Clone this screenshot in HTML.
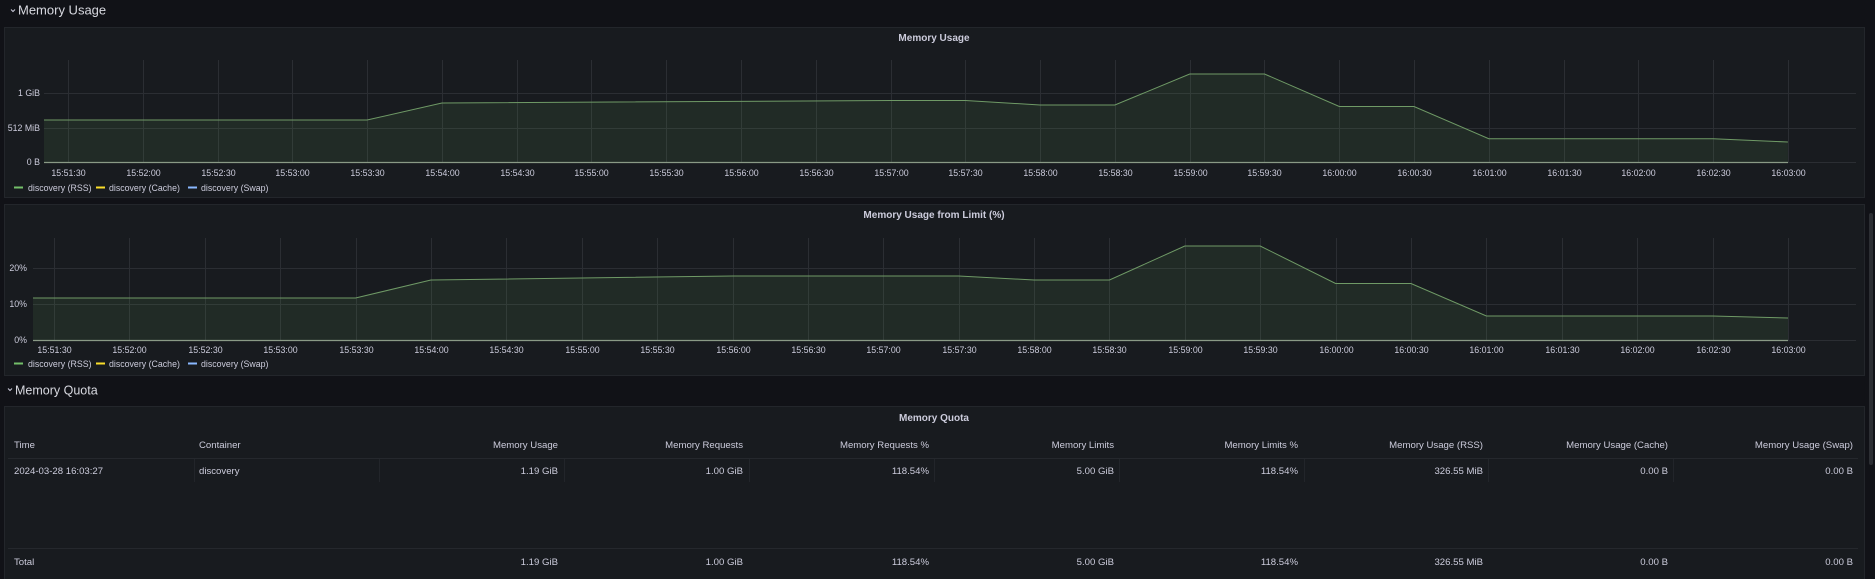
<!DOCTYPE html>
<html><head><meta charset="utf-8"><style>
html,body{margin:0;padding:0;background:#111217;width:1875px;height:579px;overflow:hidden}
svg{display:block;font-family:"Liberation Sans",sans-serif}
</style></head><body>
<svg width="1875" height="579" viewBox="0 0 1875 579" xmlns="http://www.w3.org/2000/svg">
<rect width="1875" height="579" fill="#111217"/>
<rect x="1869" y="213" width="4" height="252" rx="2" fill="#2c2e33"/>

<path d="M11 9.5 L13 11.5 L15 9.5" stroke="#ccccdc" stroke-width="1" fill="none"/>
<text x="18" y="14.5" font-size="13" fill="#d8d9e0">Memory Usage</text>

<rect x="4.5" y="27.5" width="1860" height="170" fill="#181b1f" stroke="#23262b"/>
<text x="934" y="41" font-size="10" font-weight="bold" fill="#ccccdc" text-anchor="middle">Memory Usage</text>
<g stroke="#2b2e33" stroke-width="1">
<line x1="44" y1="93.5" x2="1856" y2="93.5"/>
<line x1="44" y1="128.5" x2="1856" y2="128.5"/>
<line x1="44" y1="162.5" x2="1856" y2="162.5"/>
</g>
<g id="vg1" stroke="#2b2e33" stroke-width="1"></g>
<g font-size="8.8" fill="#ccccdc" text-anchor="end">
<text x="40" y="96">1 GiB</text>
<text x="40" y="131">512 MiB</text>
<text x="40" y="165">0 B</text>
</g>
<g id="xl1" font-size="8.8" fill="#ccccdc" text-anchor="middle"></g>
<path id="f1" fill="rgba(115,191,105,0.10)" stroke="none"/>
<path id="p1" fill="none" stroke="#6f9a66" stroke-width="1"/>
<line x1="44" y1="162.5" x2="1788" y2="162.5" stroke="#8a9a86" stroke-width="1.2"/>
<g font-size="8.8" fill="#ccccdc">
<line x1="14" y1="187.5" x2="23" y2="187.5" stroke="#73bf69" stroke-width="2"/>
<text x="28" y="191">discovery (RSS)</text>
<line x1="96" y1="187.5" x2="105" y2="187.5" stroke="#fade2a" stroke-width="2"/>
<text x="109" y="191">discovery (Cache)</text>
<line x1="188" y1="187.5" x2="197" y2="187.5" stroke="#8ab8ff" stroke-width="2"/>
<text x="201" y="191">discovery (Swap)</text>
</g>

<rect x="4.5" y="204.5" width="1860" height="171" fill="#181b1f" stroke="#23262b"/>
<text x="934" y="218" font-size="10" font-weight="bold" fill="#ccccdc" text-anchor="middle">Memory Usage from Limit (%)</text>
<g stroke="#2b2e33" stroke-width="1">
<line x1="33" y1="268.5" x2="1856" y2="268.5"/>
<line x1="33" y1="304.5" x2="1856" y2="304.5"/>
<line x1="33" y1="340.5" x2="1856" y2="340.5"/>
</g>
<g id="vg2" stroke="#2b2e33" stroke-width="1"></g>
<g font-size="8.8" fill="#ccccdc" text-anchor="end">
<text x="27" y="271">20%</text>
<text x="27" y="307">10%</text>
<text x="27" y="343">0%</text>
</g>
<g id="xl2" font-size="8.8" fill="#ccccdc" text-anchor="middle"></g>
<path id="f2" fill="rgba(115,191,105,0.10)" stroke="none"/>
<path id="p2" fill="none" stroke="#6f9a66" stroke-width="1"/>
<line x1="33" y1="340.5" x2="1788" y2="340.5" stroke="#8a9a86" stroke-width="1.2"/>
<g font-size="8.8" fill="#ccccdc">
<line x1="14" y1="363.5" x2="23" y2="363.5" stroke="#73bf69" stroke-width="2"/>
<text x="28" y="367">discovery (RSS)</text>
<line x1="96" y1="363.5" x2="105" y2="363.5" stroke="#fade2a" stroke-width="2"/>
<text x="109" y="367">discovery (Cache)</text>
<line x1="188" y1="363.5" x2="197" y2="363.5" stroke="#8ab8ff" stroke-width="2"/>
<text x="201" y="367">discovery (Swap)</text>
</g>

<path d="M8 388.5 L10 390.5 L12 388.5" stroke="#ccccdc" stroke-width="1" fill="none"/>
<text x="15" y="394.5" font-size="12.5" fill="#d8d9e0">Memory Quota</text>

<rect x="4.5" y="406.5" width="1860" height="180" fill="#181b1f" stroke="#23262b"/>
<text x="934" y="421" font-size="10" font-weight="bold" fill="#ccccdc" text-anchor="middle">Memory Quota</text>
<line x1="8" y1="458.5" x2="1858" y2="458.5" stroke="#25282d"/>
<line x1="8" y1="548.5" x2="1858" y2="548.5" stroke="#25282d"/>
<g stroke="#22252a">
<line x1="194.5" y1="459" x2="194.5" y2="482"/>
<line x1="379.5" y1="459" x2="379.5" y2="482"/>
<line x1="564.5" y1="459" x2="564.5" y2="482"/>
<line x1="749.5" y1="459" x2="749.5" y2="482"/>
<line x1="934.5" y1="459" x2="934.5" y2="482"/>
<line x1="1119.5" y1="459" x2="1119.5" y2="482"/>
<line x1="1304.5" y1="459" x2="1304.5" y2="482"/>
<line x1="1488.5" y1="459" x2="1488.5" y2="482"/>
<line x1="1673.5" y1="459" x2="1673.5" y2="482"/>
</g>
<g font-size="9.6" fill="#ccccdc">
<text x="14" y="448">Time</text>
<text x="199" y="448">Container</text>
<g text-anchor="end">
<text x="558" y="448">Memory Usage</text>
<text x="743" y="448">Memory Requests</text>
<text x="929" y="448">Memory Requests %</text>
<text x="1114" y="448">Memory Limits</text>
<text x="1298" y="448">Memory Limits %</text>
<text x="1483" y="448">Memory Usage (RSS)</text>
<text x="1668" y="448">Memory Usage (Cache)</text>
<text x="1853" y="448">Memory Usage (Swap)</text>
</g>
<text x="14" y="474">2024-03-28 16:03:27</text>
<text x="199" y="474">discovery</text>
<g text-anchor="end">
<text x="558" y="474">1.19 GiB</text>
<text x="743" y="474">1.00 GiB</text>
<text x="929" y="474">118.54%</text>
<text x="1114" y="474">5.00 GiB</text>
<text x="1298" y="474">118.54%</text>
<text x="1483" y="474">326.55 MiB</text>
<text x="1668" y="474">0.00 B</text>
<text x="1853" y="474">0.00 B</text>
</g>
<text x="14" y="565">Total</text>
<g text-anchor="end">
<text x="558" y="565">1.19 GiB</text>
<text x="743" y="565">1.00 GiB</text>
<text x="929" y="565">118.54%</text>
<text x="1114" y="565">5.00 GiB</text>
<text x="1298" y="565">118.54%</text>
<text x="1483" y="565">326.55 MiB</text>
<text x="1668" y="565">0.00 B</text>
<text x="1853" y="565">0.00 B</text>
</g>
</g>
</svg>
<script>
(function(){
var NS="http://www.w3.org/2000/svg";
var labels=["15:51:30","15:52:00","15:52:30","15:53:00","15:53:30","15:54:00","15:54:30","15:55:00","15:55:30","15:56:00","15:56:30","15:57:00","15:57:30","15:58:00","15:58:30","15:59:00","15:59:30","16:00:00","16:00:30","16:01:00","16:01:30","16:02:00","16:02:30","16:03:00"];
function build(vg,xl,x0,step,top,bot,ly){
  var g=document.getElementById(vg),t=document.getElementById(xl);
  for(var k=0;k<24;k++){
    var x=Math.round(x0+k*step)+0.5;
    var l=document.createElementNS(NS,"line");
    l.setAttribute("x1",x);l.setAttribute("x2",x);l.setAttribute("y1",top);l.setAttribute("y2",bot);
    g.appendChild(l);
    var tx=document.createElementNS(NS,"text");
    tx.setAttribute("x",x);tx.setAttribute("y",ly);tx.textContent=labels[k];
    t.appendChild(tx);
  }
}
build("vg1","xl1",68,74.78,60,163,176);
build("vg2","xl2",54,75.39,238,341,353);
function path(id,fid,x0,step,start,base,pts){
  var d="M"+start[0]+" "+start[1];
  pts.forEach(function(p){d+=" L"+(x0+p[0]*step).toFixed(1)+" "+p[1];});
  var last=x0+pts[pts.length-1][0]*step;
  document.getElementById(id).setAttribute("d",d);
  document.getElementById(fid).setAttribute("d",d+" L"+last.toFixed(1)+" "+base+" L"+start[0]+" "+base+" Z");
}
path("p1","f1",68,74.78,[44,120],162.5,[[4,120],[5,103],[11,100.5],[12,100.5],[13,105],[14,105],[15,74],[16,74],[17,106.5],[18,106.5],[19,138.7],[22,138.7],[23,142]]);
path("p2","f2",54,75.39,[33,298],340.5,[[4,298],[5,280],[9,276],[12,276],[13,280],[14,280],[15,246],[16,246],[17,283.5],[18,283.5],[19,316],[22,316],[23,318]]);
})();
</script>
</body></html>
